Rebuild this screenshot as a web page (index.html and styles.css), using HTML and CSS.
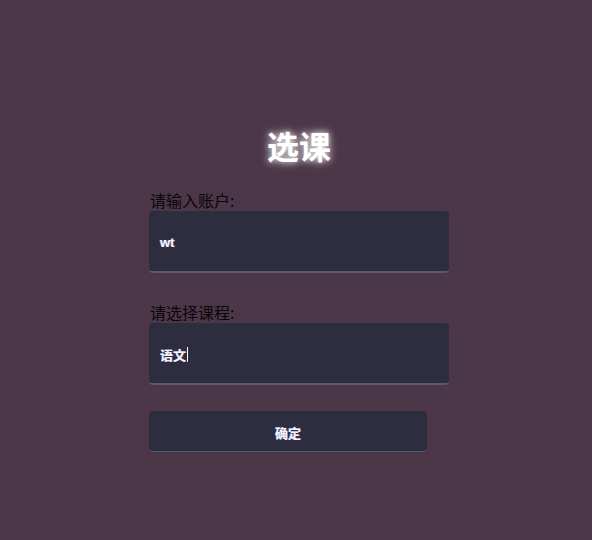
FILE: index.html
```html
<!DOCTYPE html>
<html lang="zh">
<head>
<meta charset="utf-8">
<title>选课</title>
<link rel="stylesheet" href="styles.css">
</head>
<body>
<div class="page">
  <form class="form">
    <h1 class="title">选课</h1>
    <label class="label" for="acc">请输入账户:</label>
    <div class="field"><span class="value">wt</span></div>
    <label class="label label-second" for="course">请选择课程:</label>
    <div class="field"><span class="value">语文</span><span class="caret"></span></div>
    <div class="button">确定</div>
  </form>
</div>
</body>
</html>
```
FILE: styles.css
```css
html, body {
  margin: 0;
  padding: 0;
  background: #4c3749;
  height: 100%;
}
body {
  font-family: "Noto Sans CJK SC", "Noto Sans", sans-serif;
}
.page {
  padding-top: 122px;
  padding-left: 149px;
}
.form {
  width: 300px;
  display: flex;
  flex-direction: column;
}
.title {
  margin: 0;
  height: 68px;
  line-height: 46px;
  font-size: 32px;
  font-weight: 700;
  color: #ffffff;
  text-shadow: 0 0 6px rgba(255,255,255,0.9), 0 0 12px rgba(255,255,255,0.4);
  text-align: center;
}
.label {
  display: block;
  height: 21px;
  line-height: 21px;
  font-size: 16px;
  color: #0a0608;
  padding-left: 1px;
}
.label-second {
  margin-top: 29px;
}
.field {
  height: 60px;
  background: #2e2d40;
  border-radius: 4px;
  border-bottom: 2px solid #5a5676;
  display: flex;
  align-items: center;
  padding-left: 11px;
  box-sizing: content-box;
}
.value {
  font-family: "Liberation Sans", "Noto Sans CJK SC", sans-serif;
  font-size: 13px;
  font-weight: 700;
  color: #f4f4ff;
  text-shadow: -0.6px 0 0 rgba(140,200,255,0.6), 0.6px 0 0 rgba(255,160,170,0.5);
  padding-top: 2px;
}
.caret {
  display: inline-block;
  width: 1px;
  height: 15px;
  background: #ffffff;
  margin-left: 1px;
  margin-top: 2px;
}
.button {
  margin-top: 26px;
  width: 278px;
  height: 38px;
  background: #2e2d40;
  border-radius: 4px;
  border-bottom: 1px solid #5a5676;
  display: flex;
  align-items: center;
  justify-content: center;
  font-size: 13px;
  font-weight: 700;
  color: #f4f4ff;
  text-shadow: -0.6px 0 0 rgba(140,200,255,0.6), 0.6px 0 0 rgba(255,160,170,0.5);
  padding-top: 2px;
  box-sizing: content-box;
}
```
